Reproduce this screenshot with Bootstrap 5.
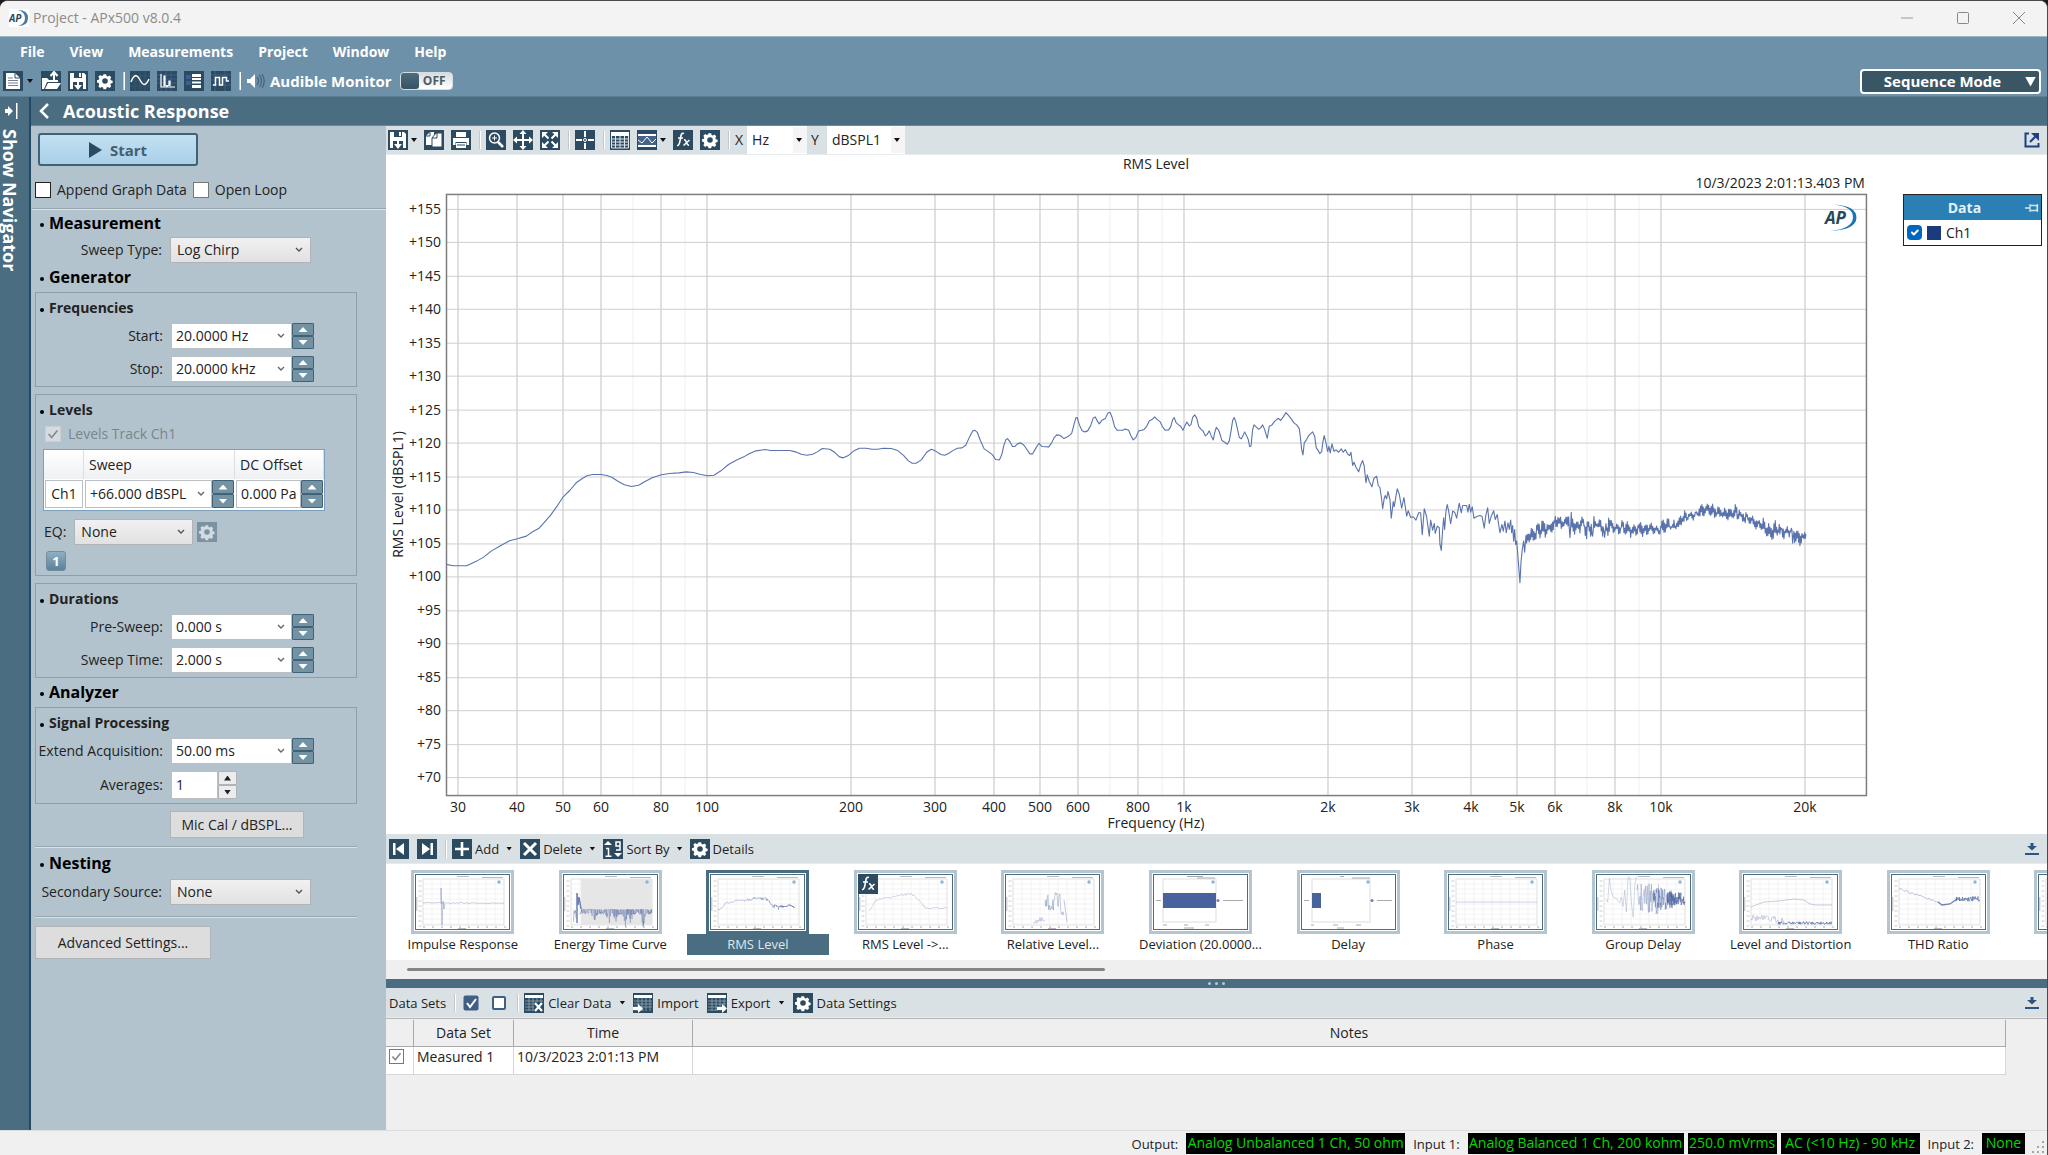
<!DOCTYPE html>
<html lang="en">
<head>
<meta charset="utf-8">
<meta name="viewport" content="width=device-width, initial-scale=1">
<title>Project - APx500 v8.0.4</title>
<link href="https://cdn.jsdelivr.net/npm/bootstrap@5.3.0/dist/css/bootstrap.min.css" rel="stylesheet">
<style>
:root{--deep:#4b6d81;--ink:#2c4b60;--pane:#b3c3cd;--strip:#dae1e5;--grey:#efefef}
body{font-family:"Open Sans","Noto Sans",sans-serif;font-size:14px;line-height:20px;color:#222;background:#1b1b1b}
.app-frame{height:100vh;min-height:1080px;border-top:1px solid #4a4a4c;border-right:1px solid #4a4a4c;border-radius:8px 8px 0 0;overflow:hidden;background:var(--grey)}
button,input,select{font:inherit;color:inherit}
.bare{background:none;border:0;padding:0;display:inline-flex;align-items:center;line-height:20px}
.bare svg,.glyph{display:block;width:20px;height:20px;flex:none}
.g7{margin-left:7px}
.caret-s{width:6px;height:4px;background:#111;clip-path:polygon(0 0,100% 0,50% 100%);flex:none}
.vrule{width:1px;height:18px;background:#c5c8ca;box-shadow:1px 0 0 #fff;flex:none;margin:0 6px 0 8px}
/* title and menu bars */
.title-strip{height:35px;background:#f3f3f3;color:#8b8b8b;padding:0 0 2px 9px}
.title-strip .win-btn{width:56px;height:33px;justify-content:center}
.menu-zone{height:61px;background:#6e91aa;border-top:1px solid #9fb6c6;border-bottom:1px solid #5c7f95;color:#fff;font-weight:700}
.menu-zone a{color:#fff;text-decoration:none}
.menu-row{height:31px;padding:0 0 1px 20px;gap:25px}
.tool-row{height:28px;padding:0 6px 2px 3px}
.audible{font-size:15px}
.off-pill{width:53px;height:18px;border-radius:4px;background:linear-gradient(#d9dcdd,#fff);color:#4c5c65;font-size:12px;font-weight:700;border:1px solid #d7dee2;position:relative;justify-content:flex-end;padding-right:6px}
.off-pill i{width:18px;height:16px;border-radius:3px;background:linear-gradient(#4d6b7c,#385463);position:absolute;left:0;top:0}
.mode-btn{width:181px;height:25px;border:2px solid #fff;border-radius:4px;background:#3a5665;color:#fff;font-weight:700;font-size:15px;justify-content:center;position:relative}
.mode-btn i{position:absolute;right:3px;top:6px;width:11px;height:10px;background:#fff;clip-path:polygon(0 0,100% 0,50% 100%)}
/* navigator rail */
.rail{width:31px;background:var(--deep);border-right:2px solid #214a66;color:#fff;flex:none}
.rail span{writing-mode:vertical-rl;font-weight:700;font-size:18px;line-height:20px;align-self:flex-start}
.page-head{height:29px;background:var(--deep);border-bottom:1px solid #6d8a9b;color:#fff;font-weight:700;font-size:18px;padding-left:7px;gap:13px;flex:none}
/* settings panel */
.settings{width:355px;background:var(--pane);flex:none;overflow:hidden;padding:7px 0 0 4px}
.start-btn{width:160px;height:33px;margin-left:3px;border:2px solid #3f6278;border-radius:3px;background:linear-gradient(#c3e0f2,#a9d0e8);color:#44606f;font-weight:700;justify-content:center;gap:8px;font-size:15px}
.start-btn svg{width:13px;height:16px}
.tick-row{margin:14px 0 8px;gap:6px}
.tickbox{appearance:none;width:16px;height:16px;background:#fff;border:1px solid #777;margin:0;flex:none}
.tickbox.dark-edge{border-color:#222}
.tickbox.off-tone{border-color:#c8d0d4;background:#d5dbdf}
.tickbox.mk{background-image:url("data:image/svg+xml,%3Csvg xmlns='http://www.w3.org/2000/svg' viewBox='0 0 16 16'%3E%3Cpath d='M3 8l3.500 4L13 4' fill='none' stroke='%23858c90' stroke-width='2'/%3E%3C/svg%3E")}
.groove{height:2px;background:#98a6ae;border-bottom:1px solid #dbe2e6;width:322px}
.groove.wide{width:auto;margin-left:-3px}
.sect{font-size:16px;font-weight:700;color:#000;height:29px;display:flex;align-items:center;padding-left:5px;gap:5px;margin:0}
.groove.wide+.sect{height:27px}
.sect.after-box{margin-top:-7px}
.sect.tall{height:31px}
.sect::before,.sub::before{content:"";width:4px;height:4px;border-radius:50%;background:#000;margin-top:3px;flex:none}
.sub{font-size:14px;font-weight:700;height:30px;display:flex;align-items:center;padding-left:4px;gap:5px;margin:0;line-height:20px}
.pbox{border:1px solid #919ea6;width:322px;margin:0 0 7px;padding:0 0 4px}
.line{display:flex;align-items:center;height:26px;gap:8px}
.line.deeper{height:28px}
.line>label{width:127px;text-align:right;flex:none;white-space:nowrap}
.line+.line{margin-top:7px}
.sel{appearance:none;height:26px;border:1px solid #b0b4b6;border-radius:0;padding:0 6px;line-height:20px;background-image:url("data:image/svg+xml,%3Csvg xmlns='http://www.w3.org/2000/svg' viewBox='0 0 8 6'%3E%3Cpath d='M1 1l3 3 3-3' fill='none' stroke='%23555' stroke-width='1.400'/%3E%3C/svg%3E"),linear-gradient(#f1f1f1,#e1e1e1);background-repeat:no-repeat;background-size:8px 6px,100% 100%;background-position:right 7px center,0 0}
.sel.w-main{width:141px}
.sel.w-eq{width:119px}
.valbox{height:26px;border:1px solid #b9bfc3;background:#fff;display:flex;align-items:center;width:121px}
.valbox input{border:0;background:none;padding:0 0 0 4px;width:1px;flex:1;outline:0}
.valbox .bare{width:20px;height:24px;justify-content:center}
.valbox svg{width:8px;height:6px}
.valbox.short{width:47px;height:28px}
.spin{display:flex;flex-direction:column;width:22px;height:26px;flex:none}
.spin button{flex:1;border:1px solid #3f6278;background:#7393a4;padding:0;display:flex;align-items:center;justify-content:center;min-height:0;border-radius:1px}
.spin i{width:9px;height:5px;background:#fff;clip-path:polygon(50% 0,100% 100%,0 100%)}
.spin button+button i{clip-path:polygon(0 0,100% 0,50% 100%)}
.spin.pale{width:19px;height:28px}
.spin.pale button{background:#ececec;border-color:#b0b4b6}
.spin.pale i{background:#222;width:7px}
.push{height:27px;border:1px solid #b0b4b6;background:#ddd;padding:0}
.push.mic{width:134px;margin-left:135px}
.push.adv{width:176px;height:33px}
.track{height:18px;gap:7px;padding-left:9px;color:#78868e}
.lv{width:282px;border:1px solid #7ba0bd;background:#fff;margin:6px 0 8px 7px;border-collapse:separate;border-spacing:0;table-layout:fixed}
.lv th{font-weight:400;height:29px;background:linear-gradient(#fff,#eef0f2);border-right:1px solid #dcdfe2;padding:0 5px}
.lv td{height:31px;padding:1px 1px 2px}
.lv .valbox{height:28px;width:auto;flex:1}
.lv .spin{height:28px}
.gear-off{opacity:.4}
.gen-badge{width:20px;height:20px;margin:6px 0 0 10px;background:linear-gradient(#8fb0c3,#5c8199);color:#fff;border-radius:3px;border:1px solid #6f8d9f;font-size:13px;font-weight:700;display:flex;justify-content:center}
/* work area */
.strip{height:30px;background:var(--strip);display:flex;align-items:center;flex:none;border-bottom:1px solid #e6ebee;padding:0 5px 0 3px}
.strip.upper{height:29px;padding-left:2px}
.strip .bare{font-size:13px;gap:3px;white-space:nowrap}
.strip.sets{font-size:13px}
.strip.sets .bare{gap:4px}
.axis-sel{appearance:none;border:0;background:#fff;height:28px;padding:0 5px}
.axis-wrap{position:relative}
.axis-wrap i{position:absolute;right:5px;top:12px;pointer-events:none}
.axis-wrap::before{content:"";position:absolute;right:0;top:1px;bottom:1px;width:14px;background:#f5f5f5;pointer-events:none}
.w60{width:60px}.w78{width:78px}
.graph-host{background:#fff;flex:1 1 0;min-height:0}
.graph-host>svg{flex:1 1 0;min-width:0;height:100%;display:block}
.key-col{width:179px;padding:39px 5px 0 35px;flex:none}
.key-card{border:1px solid #222;background:#fff}
.key-card header{height:25px;background:#2a7fb5;color:#e4f1f9;font-weight:700;padding:0 2px 0 0}
.key-card label{height:25px;padding:0 3px;gap:5px}
.key-card input{width:15px;height:15px;margin:0}
.key-card input:checked{background-color:#0067c0;border-color:#0067c0}
.swatch{width:14px;height:14px;background:#1c3a7e}
.thumbs{background:#fff;height:96px;padding:6px 0 0 3px;display:grid;grid-auto-flow:column;grid-auto-columns:8.9%;overflow:hidden;flex:none}
.thumbs .bare{flex-direction:column;justify-content:flex-start;font-size:13px;text-align:center}
.thumbs .shot{width:103px;height:64px;border:3px solid #b5c5cf;padding:1px;background:#fff;flex:none}
.thumbs .shot svg{width:95px;height:56px;border:1px solid #4b6d81}
.thumbs .cap{height:21px;width:142px;line-height:20px;white-space:nowrap}
.thumbs .now .shot{border-color:var(--deep)}
.thumbs .now .cap{background:var(--deep);color:#dfe7eb}
.thumbs .shot .fx-tag{position:absolute;left:1px;top:1px;width:20px;height:20px;border:0}
.hscroll{height:19px;background:var(--grey);padding:8px 0 0 21px;flex:none}
.hscroll div{width:698px;max-width:43%;height:3px;background:#858585;border-radius:2px}
.splitter{height:9px;background:var(--deep);gap:4px;flex:none}
.splitter i{width:3px;height:3px;border-radius:50%;background:#b9c8d1}
.data-host{height:112px;background:var(--grey);flex:none;padding-right:41px;border-top:1px solid #b5b5b5}
.dt{width:100%;table-layout:fixed;border-collapse:separate;border-spacing:0;margin-top:1px}
.dt th{font-weight:400;height:27px;text-align:center;border-right:1px solid #a9a9a9;border-bottom:1px solid #a9a9a9;padding:0}
.dt td{height:28px;background:#fff;border-right:1px solid #d6d6d6;border-bottom:1px solid #d6d6d6;padding:0 3px;vertical-align:top}
.dt .tickbox{display:block;width:15px;height:15px;margin-top:2px}
.stat{height:25px;background:#f0f0f0;border-top:1px solid #ddd;padding:1px 22px 0 0;font-size:13px;position:relative;flex:none;gap:4px}
.stat b{font-weight:400;background:#000;color:#00d800;height:21px;line-height:20px;text-align:center;font-size:14px;white-space:nowrap}
.stat span{margin:0 4px}
.grip{position:absolute;right:2px;bottom:1px}
</style>
</head>
<body>
<!-- icon sprites, each on a 20 unit tile -->
<svg width="0" height="0" class="position-absolute" aria-hidden="true">
<defs>
<g id="tile"><rect width="20" height="20" fill="#2c4b60"/></g>
<symbol id="i-new" viewBox="0 0 20 20"><use href="#tile"/><path d="M3 2h9l5 5v11H3z" fill="#fff"/><path d="M12 2v5h5" fill="none" stroke="#2c4b60"/><path d="M5 7h5M5 9.500h10M5 12h10M5 14.500h10" stroke="#70838f"/></symbol>
<symbol id="i-open" viewBox="0 0 20 20"><use href="#tile"/><path d="M1 18V7h5l2 2h9v2H6l-3 7z" fill="#fff"/><path d="M7 12h13l-4 6H4z" fill="#fff"/><path d="M13 10V3M9.500 5L13 1l3.500 4" fill="none" stroke="#fff" stroke-width="2"/></symbol>
<symbol id="i-save" viewBox="0 0 20 20"><use href="#tile"/><path d="M2 2h14l2 2v14H2z" fill="#fff"/><path d="M6 2v5h8V2M5 18v-7h10v7" fill="#2c4b60"/><path d="M11 2h2v4h-2zM9 9h2v5h3l-4 5-4-5h3z" fill="#fff"/></symbol>
<symbol id="i-gear" viewBox="0 0 20 20"><use href="#tile"/><path d="M8.500 3h3l.5 2 1.500.6 1.800-1 2 2-1 1.900.6 1.500 2 .5v2.500l-2 .5-.6 1.400 1 1.900-2 2-1.800-1.100-1.500.6-.5 2h-3l-.5-2-1.500-.6-1.800 1.100-2-2 1-1.900L3.100 13l-2-.5V10l2-.5L3.700 8l-1-1.900 2-2 1.800 1L8 4.500z" fill="#fff" transform="translate(1 .5) scale(.88)"/><circle cx="10" cy="10" r="2.800" fill="#2c4b60"/></symbol>
<symbol id="i-sine" viewBox="0 0 20 20"><use href="#tile"/><path d="M0 5h20M0 10h20M0 15h20M5 0v20M10 0v20M15 0v20" stroke="#35596f"/><path d="M1 11C4 3 7 3 10 9s6 6 9-1" fill="none" stroke="#fff" stroke-width="1.500"/></symbol>
<symbol id="i-spec" viewBox="0 0 20 20"><use href="#tile"/><path d="M0 4h20M0 8h20M0 12h20M4 0v20M9 0v20M14 0v20" stroke="#3f5f8c"/><path d="M4 3v13h14M7 16V5h1v9l2 1 2-1v-4h1v5" fill="none" stroke="#fff" stroke-width="1.200"/></symbol>
<symbol id="i-rows" viewBox="0 0 20 20"><use href="#tile"/><path d="M2 4h5v4H2zM2 10h5v4H2z" fill="#3f5f8c"/><path d="M8 3h9v3H8zM8 7h9v2H8zM8 10.500h9v2H8zM8 14h9v3H8z" fill="#fff"/></symbol>
<symbol id="i-pulse" viewBox="0 0 20 20"><use href="#tile"/><path d="M0 4h20M0 9h20M0 14h20M4 0v20M14 0v20" stroke="#3f5f8c"/><path d="M2 14h2.500V6.500h4V14h3V6.500h4V10H18" fill="none" stroke="#fff" stroke-width="1.500"/></symbol>
<symbol id="i-spk" viewBox="0 0 20 20"><path d="M1 8h3l5-5v14l-5-5H1z" fill="#fff"/><path d="M11 6q3 4 0 8M13.500 4q4 6 0 12M16 3q4.500 7 0 14" fill="none" stroke="#4a6475" stroke-width="1.300"/></symbol>
<symbol id="i-copy" viewBox="0 0 20 20"><use href="#tile"/><path d="M2 6l4-4h4v13H2z" fill="#fff"/><path d="M8 8l4-5h6v14H8z" fill="#fff" stroke="#2c4b60"/><path d="M6 2v4H2M13 3v5H8" fill="none" stroke="#2c4b60"/></symbol>
<symbol id="i-print" viewBox="0 0 20 20"><use href="#tile"/><path d="M5 2h10v5H5zM2 8h16v7h-2.500v-3h-11v3H2z" fill="#fff"/><path d="M5 13h10v5H5z" fill="#fff"/><path d="M6 15h8" stroke="#2c4b60"/></symbol>
<symbol id="i-zoom" viewBox="0 0 20 20"><use href="#tile"/><circle cx="8.500" cy="8" r="5" fill="none" stroke="#fff" stroke-width="1.500"/><path d="M12 12l5 5" stroke="#fff" stroke-width="2.500"/><path d="M6 8h5M8.500 5.500v5" stroke="#fff"/></symbol>
<symbol id="i-pan" viewBox="0 0 20 20"><use href="#tile"/><path d="M10 3v14M3 10h14" stroke="#fff" stroke-width="2"/><path d="M10 0l3.500 4h-7zM10 20l3.500-4h-7zM0 10l4-3.500v7zM20 10l-4-3.500v7z" fill="#fff"/></symbol>
<symbol id="i-fit" viewBox="0 0 20 20"><use href="#tile"/><path d="M2 2h6L2 8zM18 2v6l-6-6zM2 18v-6l6 6zM18 18h-6l6-6z" fill="#fff"/><path d="M4 4l4.500 4.500M16 4l-4.500 4.500M4 16l4.500-4.500M16 16l-4.500-4.500" stroke="#fff" stroke-width="2"/></symbol>
<symbol id="i-cross" viewBox="0 0 20 20"><use href="#tile"/><path d="M10 1v6M10 13v6M1 10h6M13 10h6" stroke="#fff" stroke-width="2"/><circle cx="10" cy="10" r="1.500" fill="none" stroke="#fff"/></symbol>
<symbol id="i-table" viewBox="0 0 20 20"><use href="#tile"/><path d="M1 2h18v4H1z" fill="#fff"/><path d="M1.500 6v12h17V6M1 9h18M1 12h18M1 15h18M5.500 6v12M10 6v12M14.500 6v12" fill="none" stroke="#dfe7eb"/></symbol>
<symbol id="i-limit" viewBox="0 0 20 20"><use href="#tile"/><path d="M1 5h18v11H1z" fill="#44638a"/><path d="M1 5h18M1 16h18" stroke="#fff" stroke-width="2"/><path d="M1 10l4 3 5-6 5 6 4-4" fill="none" stroke="#fff"/></symbol>
<symbol id="i-fx" viewBox="0 0 20 20"><use href="#tile"/><path d="M11 3.500C8.500 2.500 8 5 7.500 8S6.500 16 4 15.500M5 8h5M11 10q1.500-.5 2.500 2.500t2.500 2.500M16.500 10l-6 5.500" fill="none" stroke="#fff" stroke-width="1.600"/></symbol>
<symbol id="i-first" viewBox="0 0 20 20"><use href="#tile"/><path d="M4 4h2.500v12H4zM15 4v12l-8-6z" fill="#fff"/></symbol>
<symbol id="i-last" viewBox="0 0 20 20"><use href="#tile"/><path d="M13.500 4H16v12h-2.500zM5 4v12l8-6z" fill="#fff"/></symbol>
<symbol id="i-plus" viewBox="0 0 20 20"><use href="#tile"/><path d="M10 3v14M3 10h14" stroke="#fff" stroke-width="2.600"/></symbol>
<symbol id="i-del" viewBox="0 0 20 20"><use href="#tile"/><path d="M4 4l12 12M16 4L4 16" stroke="#fff" stroke-width="3"/></symbol>
<symbol id="i-sort" viewBox="0 0 20 20"><use href="#tile"/><path d="M5 2l4 4H1zM15 18l-4-4h8z" fill="#fff"/><path d="M3 9.500h2.500V17M2.500 17.200h6M17 11V3h-4v4h4v4h-4" fill="none" stroke="#fff" stroke-width="1.500"/></symbol>
<symbol id="i-sheet" viewBox="0 0 20 20"><use href="#tile"/><path d="M1 2h18v3H1z" fill="#fff"/><path d="M1 8h18M1 11h18M1 14h18M1 17h10M5 5v13M9 5v13M13 5v13M17 5v13" stroke="#93a7b3" stroke-width=".8"/></symbol>
<symbol id="i-clear" viewBox="0 0 20 20"><use href="#i-sheet"/><path d="M10 9h10v10H10z" fill="#2c4b60"/><path d="M11 10l7 8M18 10l-7 8" stroke="#fff" stroke-width="2.200"/></symbol>
<symbol id="i-import" viewBox="0 0 20 20"><use href="#i-sheet"/><path d="M0 14h5v-3l5 4.500L5 20v-3H0z" fill="#fff"/></symbol>
<symbol id="i-export" viewBox="0 0 20 20"><use href="#i-sheet"/><path d="M10 14h5v-3l5 4.500L15 20v-3h-5z" fill="#fff"/></symbol>
<symbol id="i-on" viewBox="0 0 20 20"><rect x="2.500" y="2.500" width="15" height="15" rx="2" fill="#3f5f85"/><path d="M6 10l3 4 6-8" fill="none" stroke="#fff" stroke-width="2"/></symbol>
<symbol id="i-none" viewBox="0 0 20 20"><rect x="4" y="4" width="12" height="12" rx="1" fill="#fff" stroke="#3f5f85" stroke-width="2"/></symbol>
<symbol id="i-dock" viewBox="0 0 20 20"><path d="M8.500 4h3v3H15l-5 4.500L5 7h3.500z" fill="#2d5584"/><path d="M3 15h14" stroke="#2d5584" stroke-width="2"/></symbol>
<symbol id="i-pop" viewBox="0 0 20 20"><path d="M7 3.500H3.500v13h13V13" fill="none" stroke="#1f3f85" stroke-width="2"/><path d="M9 3h8v8z" fill="#1f3f85"/><path d="M8 12l6-6" stroke="#1f3f85" stroke-width="2"/></symbol>
<symbol id="i-chev" viewBox="0 0 8 6"><path d="M1 1l3 3 3-3" fill="none" stroke="#666" stroke-width="1.400"/></symbol>
</defs>
</svg>

<div class="app-frame d-flex flex-column">
  <header class="title-strip d-flex align-items-center">
    <svg width="20" height="18" viewBox="0 0 20 18" class="me-1" aria-hidden="true"><rect width="20" height="18" fill="#fff"/><path d="M9 1q10 0 10 8t-10 8q7-2 7-8T9 1z" fill="#4b7b9b"/><text x="0" y="13" font-size="10" font-weight="700" font-style="italic" fill="#2c4b60">AP</text></svg>
    <span class="flex-grow-1">Project - APx500 v8.0.4</span>
    <button class="bare win-btn" aria-label="Minimize"><svg viewBox="0 0 20 20"><path d="M4 10h12" stroke="#999"/></svg></button>
    <button class="bare win-btn" aria-label="Maximize"><svg viewBox="0 0 20 20"><rect x="4.500" y="4.500" width="11" height="11" rx="1" fill="none" stroke="#888"/></svg></button>
    <button class="bare win-btn" aria-label="Close"><svg viewBox="0 0 20 20"><path d="M4 4l12 12M16 4L4 16" stroke="#888"/></svg></button>
  </header>

  <div class="menu-zone">
    <nav class="menu-row d-flex align-items-center">
      <a href="#">File</a><a href="#">View</a><a href="#">Measurements</a><a href="#">Project</a><a href="#">Window</a><a href="#">Help</a>
    </nav>
    <div class="tool-row d-flex align-items-center">
      <button class="bare" aria-label="New"><svg><use href="#i-new"/></svg><i class="caret-s ms-1"></i></button>
      <button class="bare ms-2" aria-label="Open"><svg><use href="#i-open"/></svg></button>
      <button class="bare g7" aria-label="Save"><svg><use href="#i-save"/></svg></button>
      <button class="bare g7" aria-label="Settings"><svg><use href="#i-gear"/></svg></button>
      <i class="vrule"></i>
      <button class="bare" aria-label="Signal generator"><svg><use href="#i-sine"/></svg></button>
      <button class="bare g7" aria-label="Spectrum"><svg><use href="#i-spec"/></svg></button>
      <button class="bare g7" aria-label="Meters"><svg><use href="#i-rows"/></svg></button>
      <button class="bare g7" aria-label="Digital"><svg><use href="#i-pulse"/></svg></button>
      <i class="vrule"></i>
      <svg class="glyph" aria-hidden="true"><use href="#i-spk"/></svg>
      <span class="audible ms-1 me-2">Audible Monitor</span>
      <button class="bare off-pill"><i></i>OFF</button>
      <button class="bare mode-btn ms-auto"><span class="pe-3">Sequence Mode</span><i></i></button>
    </div>
  </div>

  <div class="d-flex flex-grow-1 overflow-hidden">
    <aside class="rail d-flex flex-column">
      <svg width="20" height="20" viewBox="0 0 20 20" class="mt-1 mb-2" aria-hidden="true"><path d="M5 8h3V5l5 5-5 5v-3H5zM16 2h1.500v16H16z" fill="#fff"/></svg>
      <span>Show Navigator</span>
    </aside>
    <div class="flex-grow-1 d-flex flex-column overflow-hidden">
      <div class="page-head d-flex align-items-center">
        <svg width="12" height="18" viewBox="0 0 12 18" aria-hidden="true"><path d="M10 2L3 9l7 7" fill="none" stroke="#fff" stroke-width="2.500"/></svg>Acoustic Response
      </div>
      <div class="d-flex flex-grow-1 overflow-hidden">
        <form class="settings">
          <button type="button" class="bare start-btn"><svg viewBox="0 0 13 16"><path d="M0 0l13 8-13 8z" fill="#2c4b60"/></svg>Start</button>
          <div class="tick-row d-flex align-items-center">
            <input type="checkbox" id="app" class="tickbox dark-edge"><label for="app">Append Graph Data</label>
            <input type="checkbox" id="opl" class="tickbox"><label for="opl">Open Loop</label>
          </div>
          <div class="groove wide"></div>
          <h2 class="sect">Measurement</h2>
          <div class="line"><label for="swt">Sweep Type:</label><select id="swt" class="sel w-main"><option>Log Chirp</option></select></div>
          <h2 class="sect">Generator</h2>
          <section class="pbox">
            <h3 class="sub">Frequencies</h3>
            <div class="line" data-val="Start:|20.0000 Hz"></div>
            <div class="line" data-val="Stop:|20.0000 kHz"></div>
          </section>
          <section class="pbox">
            <h3 class="sub">Levels</h3>
            <div class="track d-flex align-items-center"><input type="checkbox" id="trk" class="tickbox off-tone mk" disabled><label for="trk">Levels Track Ch1</label></div>
            <table class="lv">
              <colgroup><col style="width:40px"><col style="width:151px"><col></colgroup>
              <tr><th></th><th>Sweep</th><th>DC Offset</th></tr>
              <tr>
                <td><div class="valbox justify-content-center">Ch1</div></td>
                <td><div class="d-flex"><div class="valbox"><input aria-label="Sweep level" value="+66.000 dBSPL"><button type="button" class="bare" aria-label="Units"><svg><use href="#i-chev"/></svg></button></div><div class="spin"><button type="button" aria-label="Up"><i></i></button><button type="button" aria-label="Down"><i></i></button></div></div></td>
                <td><div class="d-flex"><div class="valbox"><input aria-label="DC offset" value="0.000 Pa"></div><div class="spin"><button type="button" aria-label="Up"><i></i></button><button type="button" aria-label="Down"><i></i></button></div></div></td>
              </tr>
            </table>
            <div class="d-flex align-items-center ps-2"><label for="eq" class="me-2">EQ:</label><select id="eq" class="sel w-eq"><option>None</option></select><button type="button" class="bare gear-off ms-1" aria-label="EQ settings"><svg><use href="#i-gear"/></svg></button></div>
            <button type="button" class="bare gen-badge">1</button>
          </section>
          <section class="pbox">
            <h3 class="sub">Durations</h3>
            <div class="line" data-val="Pre-Sweep:|0.000 s"></div>
            <div class="line" data-val="Sweep Time:|2.000 s"></div>
          </section>
          <h2 class="sect after-box">Analyzer</h2>
          <section class="pbox">
            <h3 class="sub">Signal Processing</h3>
            <div class="line" data-val="Extend Acquisition:|50.00 ms"></div>
            <div class="line deeper"><label for="avg">Averages:</label><div class="d-flex"><div class="valbox short"><input id="avg" value="1"></div><div class="spin pale"><button type="button" aria-label="Up"><i></i></button><button type="button" aria-label="Down"><i></i></button></div></div></div>
          </section>
          <button type="button" class="push mic">Mic Cal / dBSPL...</button>
          <div class="groove mt-2"></div>
          <h2 class="sect tall">Nesting</h2>
          <div class="line"><label for="sec">Secondary Source:</label><select id="sec" class="sel w-main"><option>None</option></select></div>
          <div class="groove mb-2" style="margin-top:11px"></div>
          <button type="button" class="push adv">Advanced Settings...</button>
        </form>

        <main class="flex-grow-1 d-flex flex-column overflow-hidden">
          <div class="strip upper">
            <button class="bare" aria-label="Save graph"><svg><use href="#i-save"/></svg><i class="caret-s"></i></button>
            <button class="bare g7" aria-label="Copy"><svg><use href="#i-copy"/></svg></button>
            <button class="bare g7" aria-label="Print"><svg><use href="#i-print"/></svg></button>
            <i class="vrule"></i>
            <button class="bare" aria-label="Zoom"><svg><use href="#i-zoom"/></svg></button>
            <button class="bare g7" aria-label="Pan"><svg><use href="#i-pan"/></svg></button>
            <button class="bare g7" aria-label="Fit"><svg><use href="#i-fit"/></svg></button>
            <i class="vrule"></i>
            <button class="bare" aria-label="Cursors"><svg><use href="#i-cross"/></svg></button>
            <i class="vrule"></i>
            <button class="bare" aria-label="Data table"><svg><use href="#i-table"/></svg></button>
            <button class="bare g7" aria-label="Limits"><svg><use href="#i-limit"/></svg><i class="caret-s"></i></button>
            <button class="bare g7" aria-label="Function"><svg><use href="#i-fx"/></svg></button>
            <button class="bare g7" aria-label="Graph settings"><svg><use href="#i-gear"/></svg></button>
            <i class="vrule"></i>
            <label for="xu" class="me-1">X</label><span class="axis-wrap"><select id="xu" class="axis-sel w60"><option>Hz</option></select><i class="caret-s"></i></span>
            <label for="yu" class="ms-1 me-2">Y</label><span class="axis-wrap"><select id="yu" class="axis-sel w78"><option>dBSPL1</option></select><i class="caret-s"></i></span>
            <button class="bare ms-auto" aria-label="Pop out"><svg><use href="#i-pop"/></svg></button>
          </div>

          <div class="graph-host d-flex">
            <svg id="plot" viewBox="386 155 1482 680" preserveAspectRatio="none" role="img" aria-label="RMS Level graph"></svg>
            <div class="key-col">
              <div class="key-card">
                <header class="d-flex align-items-center"><span class="flex-grow-1 text-center">Data</span><svg width="14" height="12" viewBox="0 0 14 12" aria-hidden="true"><path d="M0 6h5M5 2v8M5 3.500h7v5H5M12.500 2v8" fill="none" stroke="#cfe4f2" stroke-width="1.300"/></svg></header>
                <label class="d-flex align-items-center"><input type="checkbox" checked class="form-check-input"><span class="swatch"></span>Ch1</label>
              </div>
            </div>
          </div>

          <div class="strip">
            <button class="bare" aria-label="First"><svg><use href="#i-first"/></svg></button>
            <button class="bare ms-2" aria-label="Last"><svg><use href="#i-last"/></svg></button>
            <i class="vrule"></i>
            <button class="bare"><svg><use href="#i-plus"/></svg>Add<i class="caret-s ms-1"></i></button>
            <button class="bare ms-2"><svg><use href="#i-del"/></svg>Delete<i class="caret-s ms-1"></i></button>
            <button class="bare ms-2"><svg><use href="#i-sort"/></svg>Sort By<i class="caret-s ms-1"></i></button>
            <button class="bare g7"><svg><use href="#i-gear"/></svg>Details</button>
            <button class="bare ms-auto" aria-label="Dock"><svg><use href="#i-dock"/></svg></button>
          </div>
          <div class="thumbs" id="thumbs"></div>
          <div class="hscroll"><div></div></div>
          <div class="splitter d-flex align-items-center justify-content-center"><i></i><i></i><i></i></div>
          <div class="strip sets">
            <span>Data Sets</span>
            <i class="vrule"></i>
            <button class="bare" aria-label="Check all"><svg><use href="#i-on"/></svg></button>
            <button class="bare ms-2" aria-label="Uncheck all"><svg><use href="#i-none"/></svg></button>
            <i class="vrule"></i>
            <button class="bare"><svg><use href="#i-clear"/></svg>Clear Data<i class="caret-s ms-1"></i></button>
            <button class="bare ms-2"><svg><use href="#i-import"/></svg>Import</button>
            <button class="bare ms-2"><svg><use href="#i-export"/></svg>Export<i class="caret-s ms-1"></i></button>
            <button class="bare ms-2"><svg><use href="#i-gear"/></svg>Data Settings</button>
            <button class="bare ms-auto" aria-label="Dock"><svg><use href="#i-dock"/></svg></button>
          </div>
          <div class="data-host">
            <table class="dt">
              <colgroup><col style="width:28px"><col style="width:100px"><col style="width:179px"><col></colgroup>
              <thead><tr><th></th><th>Data Set</th><th>Time</th><th>Notes</th></tr></thead>
              <tbody><tr><td><input type="checkbox" class="tickbox mk" aria-label="Measured 1"></td><td>Measured 1</td><td>10/3/2023 2:01:13 PM</td><td></td></tr></tbody>
            </table>
          </div>
        </main>
      </div>
    </div>
  </div>

  <footer class="stat d-flex align-items-center justify-content-end">
    <span>Output:</span><b style="width:219px">Analog Unbalanced 1 Ch, 50 ohm</b>
    <span>Input 1:</span><b style="width:216px">Analog Balanced 1 Ch, 200 kohm</b>
    <b style="width:89px">250.0 mVrms</b><b style="width:139px">AC (&lt;10 Hz) - 90 kHz</b>
    <span>Input 2:</span><b style="width:43px">None</b>
    <svg class="grip" width="14" height="14" viewBox="0 0 14 14" aria-hidden="true"><path d="M11 1h2v2h-2zM11 6h2v2h-2zM11 11h2v2h-2zM6 6h2v2H6zM6 11h2v2H6zM1 11h2v2H1z" fill="#a5a5a5"/></svg>
  </footer>
</div>

<script src="https://cdn.jsdelivr.net/npm/bootstrap@5.3.0/dist/js/bootstrap.bundle.min.js"></script>
<script>
// value rows of the settings panel
document.querySelectorAll('[data-val]').forEach((row, i) => {
  const [name, value] = row.dataset.val.split('|');
  row.innerHTML = `<label for="v${i}">${name}</label><div class="d-flex"><div class="valbox"><input id="v${i}" value="${value}"><button type="button" class="bare" aria-label="Units"><svg><use href="#i-chev"/></svg></button></div><div class="spin"><button type="button" aria-label="Up"><i></i></button><button type="button" aria-label="Down"><i></i></button></div></div>`;
});

// repeatable noise
let seed = 7;
const rnd = () => (seed = (seed * 16807) % 2147483647) / 2147483647;

// measured curve: three stretches, each with its own origin and scale
const low = "43,495 60,499 96,499 122,485 140,473 160,455 185,438 208,424 228,418 252,410 268,397 285,386 300,367 315,347 332,320 348,292 365,273 382,250 398,237 410,229 425,225 447,225 462,228 475,233 492,246 508,256 526,261 545,257 562,246 582,234 605,226 625,222 650,220 670,217 688,219 705,224 725,229 742,227 760,214 780,195 800,182 820,172 835,162 852,154 875,150 890,153 940,153 955,157 970,164 985,167 1000,164 1012,157 1025,147 1045,149 1058,159 1070,172 1080,175 1092,169 1108,154 1122,146 1140,146 1155,149 1170,149 1185,146 1205,147 1222,153 1238,168 1250,184 1260,191 1270,191 1284,181 1298,158 1310,149 1320,154 1335,165 1345,167 1355,162 1365,154 1378,146 1390,145 1400,137 1410,112 1418,94 1424,92 1430,98 1438,122 1448,148 1460,157 1470,166 1478,180 1488,181 1494,165 1500,135 1505,120 1509,117 1515,126 1522,141 1528,141 1535,133 1544,130";
const mid = "12,137 30,163 38,163 48,145 57,131 66,141 86,142 95,130 102,115 110,106 120,107 132,117 144,111 155,101 162,75 168,54 172,54 178,75 186,93 194,97 203,94 212,78 220,55 226,52 232,64 238,73 246,62 256,57 264,40 270,38 276,52 284,82 292,92 308,92 316,88 326,92 332,107 340,121 348,113 356,94 364,92 372,90 380,80 388,64 396,60 404,52 412,60 420,66 428,82 436,92 446,91 452,82 458,60 463,54 468,68 475,75 482,80 489,92 496,76 501,67 508,79 513,75 518,53 524,46 530,55 536,80 544,90 550,95 556,109 562,104 568,94 574,109 580,121 584,100 589,83 596,92 602,110 606,123 614,128 622,134 628,124 634,90 638,62 643,54 648,68 654,95 658,113 664,118 670,106 674,97 680,109 685,120 689,141 693,140 698,90 702,76 710,83 716,89 722,85 728,76 734,90 742,116 748,80 756,76 764,65 774,56 782,62 790,52 798,39 806,48 814,58 822,70 830,76 838,87 841,110 845,150 849,166 853,130 860,120 866,108 872,102 878,97 884,110 889,145 895,153 899,162 905,156 909,125 913,108 918,130 923,156 927,140 931,160 936,133 942,155 948,151 956,158 964,148 970,158 976,150 984,165 989,168 993,158 998,198 1002,188 1008,203 1016,217 1022,196 1028,183 1033,200 1038,250 1042,226 1048,246 1056,262 1062,236 1070,230 1075,258 1080,264 1085,300 1088,328 1093,296 1096,288 1100,298 1104,276 1110,300 1114,356 1120,306 1123,322 1128,290 1132,268 1138,284 1145,326 1152,294 1160,350 1165,334 1172,354 1180,352 1188,362 1196,340 1202,340 1207,406 1213,328 1220,352 1228,410 1232,362 1238,392 1243,372 1246,402 1252,380 1258,385";
const high = "60,225 64,243 68,180 71,145 74,180 78,125 82,105 86,125 92,163 98,125 104,128 110,146 118,101 124,130 128,108 140,108 144,128 148,104 152,128 157,112 162,146 172,140 180,138 186,140 193,176 197,140 203,115 208,162 214,140 221,124 226,150 232,135 236,165 240,190 246,165 250,185 255,155 259,190 264,160 268,180 272,152 275,190 278,168 281,215 284,180 287,225 290,215 293,250 296,290 300,340 303,280 307,240 311,215 314,248";
// upper and lower edge of the noisy tail
const env = [[318,195,235],[330,185,215],[350,168,205],[365,165,200],[385,160,190],[400,155,185],[410,140,180],[430,145,170],[445,140,180],[455,140,190],[465,150,180],[500,155,190],[540,150,180],[555,150,190],[575,165,190],[600,162,188],[650,168,195],[680,160,190],[715,172,192],[730,155,185],[775,155,178],[785,135,170],[800,128,150],[825,130,148],[840,108,135],[880,110,135],[910,125,145],[925,112,142],[960,120,150],[1000,145,165],[1030,155,190],[1060,165,200],[1090,170,195],[1115,172,208],[1140,188,218],[1150,195,220],[1159,188,208]];
const spikes = {450:205, 500:208, 518:200, 554:204, 566:146, 1118:221};
const pts = [];
const add = (s, x0, kx, y0) => s.split(' ').forEach(p => { const [x, y] = p.split(',').map(Number); pts.push([x0 + x / kx, y0 + y / 3]); });
add(low, 430, 2.613, 400); add(mid, 1020, 3, 400); add(high, 1420, 3, 470);
let up = false;
for (let x = 318; x <= 1159; x += 2) {
  let k = env.findIndex(e => e[0] >= x); if (k < 1) k = 1;
  const a = env[k - 1], b = env[k], t = (x - a[0]) / (b[0] - a[0]);
  const lo = a[1] + t * (b[1] - a[1]), hi = a[2] + t * (b[2] - a[2]), c = (lo + hi) / 2, h = (hi - lo) / 2;
  up = !up;
  const drift = .5 * Math.sin(x * .37) + .3 * Math.sin(x * .151);
  pts.push([1420 + x / 3, 470 + (spikes[x] || c + h * ((up ? -1 : 1) * (.1 + 1.100 * rnd()) + drift)) / 3]);
}
const line = pts.map(p => p[0].toFixed(1) + ',' + p[1].toFixed(1)).join(' ');

// main graph
const L = 446.5, R = 1866.5, T = 194.5, B = 796.5;
const fx = f => 1184 + 477 * Math.log10(f / 1000), fy = v => 208.5 + (155 - v) * 6.7;
let g = '<rect x="386" y="155" width="1482" height="680" fill="#fff"/>';
for (let d = 10; d <= 10000; d *= 10) for (let m = 1; m < 10; m++) {
  const f = d * m; if (f < 30 || f > 20000) continue;
  const faint = m === 7 || m === 9, x = Math.round(fx(f));
  g += `<path d="M${x} ${T}V${B}" stroke="${faint ? '#f0f0f0' : '#e0e0e0'}" stroke-width="${faint ? 1 : 2}"/>`;
  if (!faint) g += `<text x="${x}" y="813" text-anchor="middle">${f >= 1000 ? f / 1000 + 'k' : f}</text>`;
}
for (let v = 70; v <= 155; v += 5) {
  const y = Math.round(fy(v));
  g += `<path d="M${L} ${y + .5}H${R}" stroke="#cfcfcf"/><text x="441" y="${y + 5}" text-anchor="end">+${v}</text>`;
}
g += `<rect x="${L}" y="${T}" width="${R - L}" height="${B - T}" fill="none" stroke="#7d7d7d" stroke-width="1.500"/>
<polyline points="${line}" fill="none" stroke="#5a73ad" stroke-width="1.100" stroke-linejoin="round"/>
<text x="1156" y="169" text-anchor="middle">RMS Level</text>
<text x="1865" y="188" text-anchor="end">10/3/2023 2:01:13.403 PM</text>
<text x="1156" y="829" text-anchor="middle">Frequency (Hz)</text>
<text transform="translate(403 495) rotate(-90)" text-anchor="middle">RMS Level (dBSPL1)</text>
<path d="M1834 204.500Q1857 206 1856.500 218T1830 231Q1852 229 1853 218T1834 204.500z" fill="#1f74b3"/>
<text x="1825" y="224" font-size="17" font-weight="700" font-style="italic" fill="#27475c">AP</text>`;
const plot = document.getElementById('plot');
plot.innerHTML = g;
plot.setAttribute('font-size', '14'); plot.setAttribute('fill', '#222');

// thumbnails of the other results, drawn on a 93 x 54 canvas
const noise = (x0, x1, step, f) => { let s = ''; for (let x = x0; x <= x1; x += step) s += x.toFixed(1) + ',' + f(x, rnd() - .5).toFixed(1) + ' '; return s; };
const pl = (p, o = .6, w = .7) => `<polyline points="${p}" fill="none" stroke="#4a62a0" stroke-opacity="${o}" stroke-width="${w}"/>`;
const rms = pts.filter((p, i) => i % 2 === 0).map(p => ((p[0] - 446) * .0563 + 7).toFixed(1) + ',' + ((p[1] - 195) * .083 + 4).toFixed(1)).join(' ');
const grid = (r = 88, b = 50) => {
  let s = '';
  for (let x = 7; x <= r; x += 9) s += `<path d="M${x} 4V${b}" stroke="#eee" stroke-width=".7"/><path d="M${x} 52h2" stroke="#aaa"/>`;
  for (let y = 4; y <= b; y += 5) s += `<path d="M7 ${y}H${r}" stroke="#eee" stroke-width=".7"/><path d="M2.500 ${y + 2}h3" stroke="#ccc"/>`;
  return s + `<rect x="7" y="4" width="${r - 7}" height="${b - 4}" fill="none" stroke="#ddd" stroke-width=".7"/><path d="M41 1.500h12M66 2.500h21M42 53.500h8M.8 22v14" stroke="#bbb"/><circle cx="${r - 5}" cy="7" r="1.700" fill="#8fb3d0"/>`;
};
const dips = [30, 45, 52, 61, 67, 79];
const dipAt = x => dips.reduce((m, d, i) => Math.max(m, (i % 2 ? 13 : 10) * Math.exp(-Math.pow((x - d) / 1.800, 2))), 0);
const items = [
  ['Impulse Response', grid() + pl(noise(7, 88, 1.500, (x, n) => 28 + n * 1.200), .4) + pl('25,28 25,13 26,50 27,26 28,34 29,29', .5)],
  ['Energy Time Curve', grid() + '<rect x="17" y="4" width="71" height="46" fill="#e6e6e6"/><circle cx="83" cy="7" r="1.700" fill="#8fb3d0"/>' + pl(noise(9, 12, .5, (x, n) => 42 + n * 14), .6) + pl('13,48 13,18 14,30 15,22 17,34', .8, 1.500) + pl(noise(16, 88, .25, (x, n) => n < 0 ? 34 - n * 2 : 37 + n * 5 + dipAt(x) * (.3 + n * 1.400)), .55, .6)],
  ['RMS Level', grid() + pl(rms, .5)],
  ['RMS Level ->...', grid() + pl(noise(10, 88, 1, (x, n) => (x < 17 ? 53 - x * 1.600 : x < 52 ? 28 - x * .18 : x < 66 ? 18 + (x - 52) : 33) + n * 2), .35)],
  ['Relative Level...', grid() + pl(noise(27, 39, 1, (x, n) => 46 + n * 7), .4) + pl(noise(39, 58, .6, (x, n) => 32 - Math.sin((x - 39) / 6) * 5 + n * 20), .45) + pl('58,25 61,47', .5)],
  ['Deviation (20.0000...', '<rect x="9" y="4" width="53" height="43" fill="none" stroke="#ddd"/><path d="M33 1.500h16M43 3h18M9 50h4M30 50h4M51 50h4M30 53h10M2 25.500h5M69 25.500h20" stroke="#aaa"/><rect x="9" y="18" width="53" height="15" fill="#47629c"/><circle cx="64" cy="25.500" r="1.500" fill="#6b82b8"/><circle cx="59" cy="7" r="1.700" fill="#8fb3d0"/>'],
  ['Delay', '<rect x="10" y="4" width="58" height="43" fill="none" stroke="#ddd"/><path d="M38 1.500h4M50 3h18M9 50h3M31 50h5M54 50h5M35 53h7M2 25.500h5M75 25.500h15" stroke="#aaa"/><rect x="10" y="18" width="9" height="15" fill="#47629c"/><circle cx="70" cy="25.500" r="1.500" fill="#6b82b8"/><circle cx="66" cy="7" r="1.700" fill="#8fb3d0"/>'],
  ['Phase', grid() + pl('7,27 88,27', .4)],
  ['Group Delay', grid() + pl(noise(9, 40, 1.700, (x, n) => 22 + n * 42), .4, .6) + pl(noise(40, 62, .6, (x, n) => 24 + n * 32), .5, .6) + pl(noise(56, 76, .3, (x, n) => 24 + n * 24), .6, .7) + pl(noise(70, 88, .3, (x, n) => 24 + n * 13), .9)],
  ['Level and Distortion', grid() + pl('7,32 12,30 20,27 35,26 50,24 60,25 66,29 72,30 88,30', .45) + pl(noise(7, 40, 1, (x, n) => 42 + n * 7 + x / 12), .4) + pl(noise(34, 88, .5, (x, n) => 48 + n * 3), .8, .8)],
  ['THD Ratio', grid() + pl(noise(7, 48, 1.500, (x, n) => 12 + x * .32 + n * 2.500), .5) + pl('46,27 50,30 58,29 65,24', .8, 1.300) + pl(noise(64, 88, .4, (x, n) => 24 + n * 5), .9)],
  ['', grid()]
];
document.getElementById('thumbs').innerHTML = items.map(([name, art], i) =>
  `<button class="bare ${i === 2 ? 'now' : ''}" ${name ? '' : 'aria-label="Next result"'}><span class="shot position-relative"><svg viewBox="0 0 93 54" preserveAspectRatio="none">${art}</svg>${i === 3 ? '<svg class="fx-tag"><use href="#i-fx"/></svg>' : ''}</span><span class="cap">${name.replace('>', '&gt;')}</span></button>`).join('');
</script>
</body>
</html>
